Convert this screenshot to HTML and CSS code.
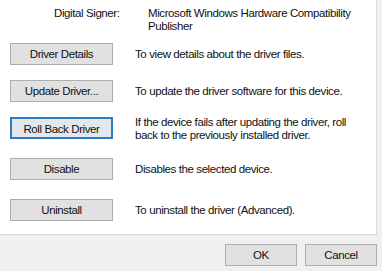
FILE: index.html
```
<!DOCTYPE html>
<html>
<head>
<meta charset="utf-8">
<link rel="stylesheet" href="styles.css">
</head>
<body>
<div class="dialog">
  <div class="panel">
    <div class="signer">
      <div class="signer-label">Digital Signer:</div>
      <div class="signer-value">Microsoft Windows Hardware Compatibility Publisher</div>
    </div>
    <div class="actions">
      <div class="row">
        <button class="btn">Driver Details</button>
        <div class="desc">To view details about the driver files.</div>
      </div>
      <div class="row">
        <button class="btn">Update Driver...</button>
        <div class="desc">To update the driver software for this device.</div>
      </div>
      <div class="row row-wide">
        <button class="btn btn-focus">Roll Back Driver</button>
        <div class="desc">If the device fails after updating the driver, roll back to the previously installed driver.</div>
      </div>
      <div class="row row-wide">
        <button class="btn">Disable</button>
        <div class="desc">Disables the selected device.</div>
      </div>
      <div class="row">
        <button class="btn">Uninstall</button>
        <div class="desc">To uninstall the driver (Advanced).</div>
      </div>
    </div>
  </div>
  <div class="footer">
    <button class="btn btn-footer">OK</button>
    <button class="btn btn-footer">Cancel</button>
  </div>
</div>
</body>
</html>
```
FILE: styles.css
```
html, body {
  margin: 0;
  padding: 0;
}
body {
  background: #f0f0f0;
  font-family: "Liberation Sans", Arial, sans-serif;
  font-size: 11.5px;
  letter-spacing: -0.4px;
  color: #111;
  width: 382px;
  height: 271px;
  overflow: hidden;
}
.dialog {
  display: flex;
  flex-direction: column;
  height: 271px;
}
.panel {
  background: #fff;
  width: 376px;
  height: 234px;
  border-right: 1px solid #d9d9d9;
  border-bottom: 1px solid #d9d9d9;
  box-sizing: content-box;
}
.signer {
  display: grid;
  grid-template-columns: 94px 222px;
  padding: 7px 0 0 54px;
  line-height: 13px;
}
.actions {
  display: flex;
  flex-direction: column;
  padding: 10px 0 0 10px;
}
.row {
  display: flex;
  align-items: center;
  height: 22px;
  margin-bottom: 15px;
  gap: 22px;
}
.row-wide {
  margin-bottom: 19px;
}
.desc {
  line-height: 13px;
  width: 236px;
  padding-top: 1px;
}
.btn {
  font-family: inherit;
  font-size: inherit;
  letter-spacing: inherit;
  color: #111;
  background: #e1e1e1;
  border: 1px solid #adadad;
  width: 103px;
  height: 22px;
  padding: 0;
  margin: 0;
  box-sizing: border-box;
  flex: none;
  line-height: 20px;
  text-align: center;
}
.btn-focus {
  border: 2px solid #2a7bc4;
  background: #e3e6ea;
}
.footer {
  display: flex;
  justify-content: flex-end;
  gap: 8px;
  padding: 9px 5px 0 0;
}
.btn-footer {
  width: 72px;
}
```
